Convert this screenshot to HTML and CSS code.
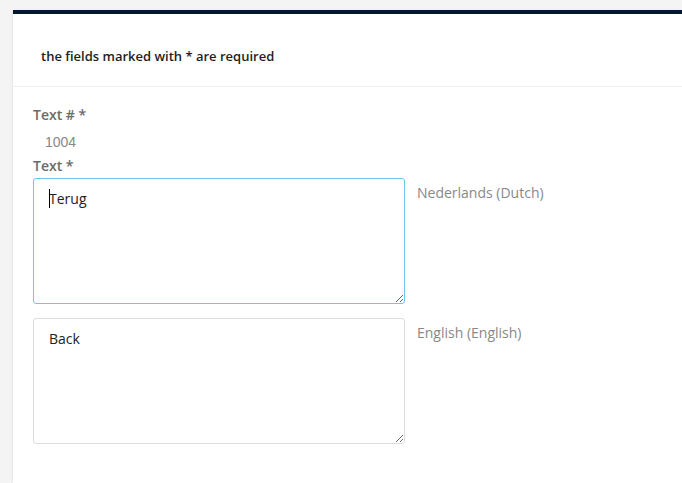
FILE: index.html
```html
<!DOCTYPE html>
<html>
<head>
<meta charset="utf-8">
<link rel="stylesheet" href="styles.css">
</head>
<body>
<div class="card">
  <div class="card-head">the fields marked with * are required</div>
  <div class="form">
    <div class="label">Text # *</div>
    <div class="value">1004</div>
    <div class="label">Text *</div>
    <div class="row">
      <div class="ta-wrap">
        <textarea class="ta ta-focus">Terug</textarea>
        <span class="caret"></span>
      </div>
      <div class="lang">Nederlands (Dutch)</div>
    </div>
    <div class="row">
      <div class="ta-wrap">
        <textarea class="ta">Back</textarea>
      </div>
      <div class="lang">English (English)</div>
    </div>
  </div>
</div>
</body>
</html>
```
FILE: styles.css
```css
html, body {
  margin: 0;
  padding: 0;
  background: #f4f4f4;
  overflow: hidden;
}
body {
  padding: 10px 0 0 13px;
  font-family: "Open Sans", sans-serif;
}
.card {
  background: #fff;
  border-top: 4px solid #03182e;
  height: calc(100vh - 14px);
  box-shadow: -1px 0 2px rgba(0,0,0,0.06);
}
.card-head {
  padding: 33px 28px 21px;
  font-size: 13px;
  line-height: 18px;
  font-weight: 600;
  color: #1e1e1e;
  border-bottom: 1px solid #eee;
}
.form {
  padding: 18px 20px 0;
}
.label {
  font-size: 14px;
  line-height: 20px;
  font-weight: 600;
  color: #6b6b6b;
}
.value {
  font-family: "Liberation Sans", Arial, sans-serif;
  font-size: 14px;
  line-height: 20px;
  color: #888;
  padding-left: 12px;
  margin: 7px 0 4px;
}
.row {
  display: flex;
  gap: 12px;
  margin-top: 2px;
}
.row + .row {
  margin-top: 14px;
}
.ta-wrap {
  position: relative;
  display: flex;
}
.ta {
  box-sizing: border-box;
  width: 372px;
  height: 126px;
  border: 1px solid #ddd;
  border-radius: 3px;
  padding: 10px 15px;
  font-family: "Open Sans", sans-serif;
  font-size: 14px;
  line-height: 20px;
  color: #222;
  outline: none;
  margin: 0;
}
.ta-focus {
  border-color: #6cc7f0;
}
.caret {
  position: absolute;
  left: 16px;
  top: 11px;
  width: 1px;
  height: 19px;
  background: #000;
}
.lang {
  font-size: 14px;
  line-height: 20px;
  color: #888;
  padding-top: 5px;
}
```
